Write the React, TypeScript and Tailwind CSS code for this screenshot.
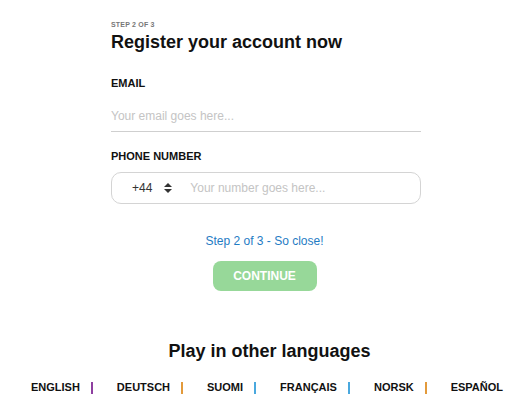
import React from "react";

const languages = [
  { name: "ENGLISH", sep: "bg-[#8e3fa0]" },
  { name: "DEUTSCH", sep: "bg-[#e39a3b]" },
  { name: "SUOMI", sep: "bg-[#4aa8de]" },
  { name: "FRANÇAIS", sep: "bg-[#4aa8de]" },
  { name: "NORSK", sep: "bg-[#e39a3b]" },
  { name: "ESPAÑOL", sep: "" },
];

export default function App() {
  return (
    <div className="w-[529px] h-[414px] bg-white font-['Liberation_Sans',Arial,sans-serif] text-[#111]">
      <div className="w-[310px] ml-[111px] pt-[21px]">
        <p className="text-[7px] font-bold text-[#777] leading-[8px] tracking-[0.2px]">STEP 2 OF 3</p>
        <h1 className="text-[18px] font-bold leading-[22px] mt-[2px]">Register your account now</h1>

        <label className="block text-[11px] font-bold mt-[24px] leading-[13px]">EMAIL</label>
        <div className="mt-[18px] border-b border-[#cfcfcf] pb-[7px]">
          <input
            className="block w-full h-[16px] outline-none text-[12px] leading-[16px] placeholder:text-[#c4c4c4]"
            placeholder="Your email goes here..."
          />
        </div>

        <label className="block text-[11px] font-bold mt-[18px] leading-[13px]">PHONE NUMBER</label>
        <div className="mt-[9px] h-[32px] border border-[#d4d4d4] rounded-[10px] flex items-center">
          <span className="ml-[20px] text-[12px] text-[#333]">+44</span>
          <svg className="ml-[12px]" width="8" height="10" viewBox="0 0 8 10">
            <path d="M4 0 L8 4 L0 4 Z" fill="#333" />
            <path d="M0 6 L8 6 L4 10 Z" fill="#333" />
          </svg>
          <input
            className="ml-[18px] flex-1 outline-none text-[12px] placeholder:text-[#c4c4c4]"
            placeholder="Your number goes here..."
          />
        </div>
      </div>

      <div className="flex flex-col items-center">
        <p className="mt-[30px] text-[12px] text-[#1f7cc4] leading-[14px]">Step 2 of 3 - So close!</p>
        <button className="mt-[13px] w-[104px] h-[30px] rounded-[8px] bg-[#97d899] text-white text-[12px] font-bold">
          CONTINUE
        </button>
        <h2 className="mt-[49px] pl-[10px] text-[18px] font-bold leading-[22px]">Play in other languages</h2>
      </div>

      <div className="flex justify-center mt-[19px] pl-[5px]">
        {languages.map((l, i) => (
          <div key={l.name} className={`flex items-center ${i > 0 ? "ml-[24px]" : ""}`}>
            <span className="text-[11px] font-bold leading-[13px]">{l.name}</span>
            {l.sep && <span className={`ml-[11px] w-[2px] h-[12px] ${l.sep}`} />}
          </div>
        ))}
      </div>
    </div>
  );
}
